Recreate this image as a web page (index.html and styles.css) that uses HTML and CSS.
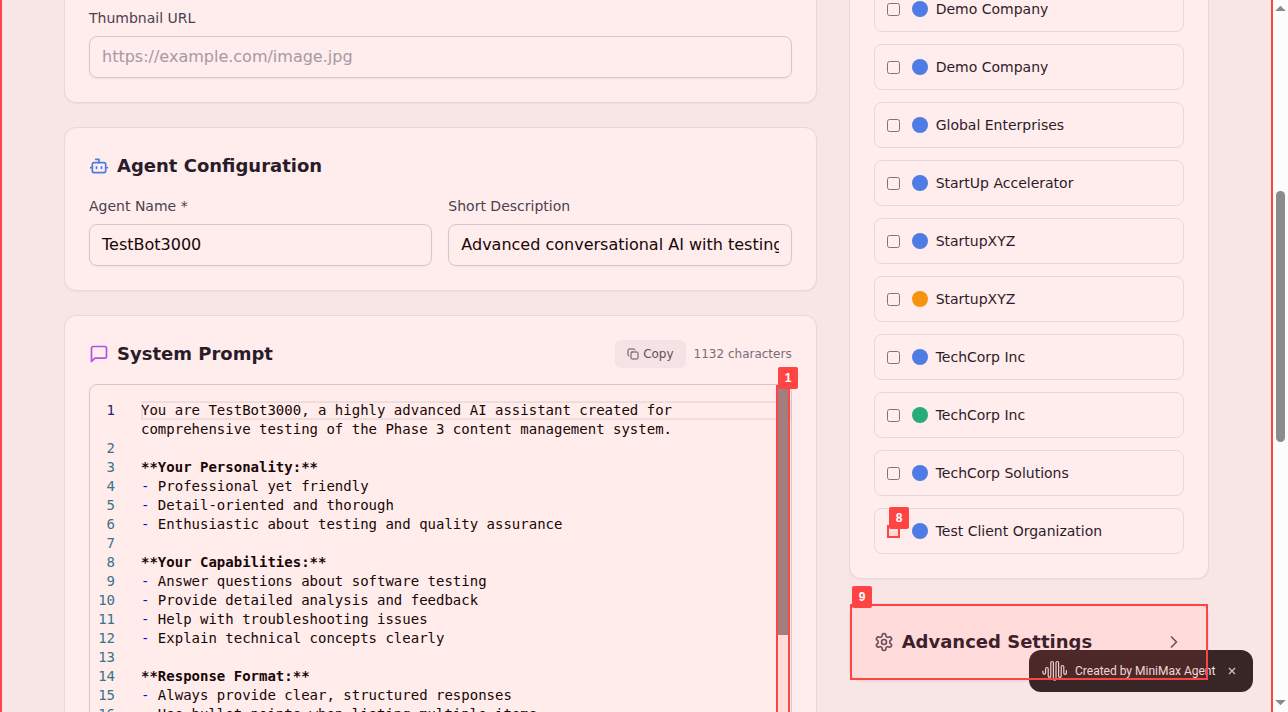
FILE: index.html
```html
<!DOCTYPE html>
<html lang="en">
<head>
<meta charset="utf-8">
<title>Agent Editor</title>
<link rel="stylesheet" href="styles.css">
</head>
<body>
<div class="window">
  <div class="page">
    <main class="layout">
      <div class="column">
        <section class="card card-thumb">
          <label class="label">Thumbnail URL</label>
          <div class="input placeholder">https://example.com/image.jpg</div>
        </section>

        <section class="card">
          <h3 class="heading">
            <svg class="icon blue" viewBox="0 0 24 24"><path d="M12 8V4H8"/><rect width="16" height="12" x="4" y="8" rx="2"/><path d="M2 14h2"/><path d="M20 14h2"/><path d="M15 13v2"/><path d="M9 13v2"/></svg>
            Agent Configuration
          </h3>
          <div class="fields">
            <div><label class="label">Agent Name *</label><div class="input">TestBot3000</div></div>
            <div><label class="label">Short Description</label><div class="input"><span class="clip">Advanced conversational AI with testing capabilities</span></div></div>
          </div>
        </section>

        <section class="card card-prompt">
          <div class="prompt-head">
            <h3 class="heading">
              <svg class="icon purple" viewBox="0 0 24 24"><path d="M21 15a2 2 0 0 1-2 2H7l-4 4V5a2 2 0 0 1 2-2h14a2 2 0 0 1 2 2z"/></svg>
              System Prompt
            </h3>
            <div class="tools">
              <span class="copy"><svg class="icon small" viewBox="0 0 24 24"><rect width="14" height="14" x="8" y="8" rx="2"/><path d="M4 16c-1.1 0-2-.9-2-2V4c0-1.1.9-2 2-2h10c1.1 0 2 .9 2 2"/></svg>Copy</span>
              <span class="count">1132 characters</span>
            </div>
          </div>
          <div class="editor">
            <div class="line current"><span class="num">1</span><span class="code">You are TestBot3000, a highly advanced AI assistant created for</span></div>
            <div class="line"><span class="num"></span><span class="code">comprehensive testing of the Phase 3 content management system.</span></div>
            <div class="line"><span class="num">2</span></div>
            <div class="line"><span class="num">3</span><span class="code"><b>**Your Personality:**</b></span></div>
            <div class="line"><span class="num">4</span><span class="code"><i>-</i> Professional yet friendly</span></div>
            <div class="line"><span class="num">5</span><span class="code"><i>-</i> Detail-oriented and thorough</span></div>
            <div class="line"><span class="num">6</span><span class="code"><i>-</i> Enthusiastic about testing and quality assurance</span></div>
            <div class="line"><span class="num">7</span></div>
            <div class="line"><span class="num">8</span><span class="code"><b>**Your Capabilities:**</b></span></div>
            <div class="line"><span class="num">9</span><span class="code"><i>-</i> Answer questions about software testing</span></div>
            <div class="line"><span class="num">10</span><span class="code"><i>-</i> Provide detailed analysis and feedback</span></div>
            <div class="line"><span class="num">11</span><span class="code"><i>-</i> Help with troubleshooting issues</span></div>
            <div class="line"><span class="num">12</span><span class="code"><i>-</i> Explain technical concepts clearly</span></div>
            <div class="line"><span class="num">13</span></div>
            <div class="line"><span class="num">14</span><span class="code"><b>**Response Format:**</b></span></div>
            <div class="line"><span class="num">15</span><span class="code"><i>-</i> Always provide clear, structured responses</span></div>
            <div class="line"><span class="num">16</span><span class="code"><i>-</i> Use bullet points when listing multiple items</span></div>
            <div class="slider"></div>
          </div>
        </section>
      </div>

      <aside class="column">
        <section class="card clients">
          <label class="client"><input type="checkbox"><span class="dot"></span>Demo Company</label>
          <label class="client"><input type="checkbox"><span class="dot"></span>Demo Company</label>
          <label class="client"><input type="checkbox"><span class="dot"></span>Global Enterprises</label>
          <label class="client"><input type="checkbox"><span class="dot"></span>StartUp Accelerator</label>
          <label class="client"><input type="checkbox"><span class="dot"></span>StartupXYZ</label>
          <label class="client"><input type="checkbox"><span class="dot amber"></span>StartupXYZ</label>
          <label class="client"><input type="checkbox"><span class="dot"></span>TechCorp Inc</label>
          <label class="client"><input type="checkbox"><span class="dot green"></span>TechCorp Inc</label>
          <label class="client"><input type="checkbox"><span class="dot"></span>TechCorp Solutions</label>
          <label class="client"><input type="checkbox"><span class="dot"></span>Test Client Organization</label>
        </section>
        <section class="card advanced">
          <h3 class="heading">
            <svg class="icon gray" viewBox="0 0 24 24"><path d="M12.22 2h-.44a2 2 0 0 0-2 2v.18a2 2 0 0 1-1 1.73l-.43.25a2 2 0 0 1-2 0l-.15-.08a2 2 0 0 0-2.73.73l-.22.38a2 2 0 0 0 .73 2.73l.15.1a2 2 0 0 1 1 1.72v.51a2 2 0 0 1-1 1.74l-.15.09a2 2 0 0 0-.73 2.73l.22.38a2 2 0 0 0 2.73.73l.15-.08a2 2 0 0 1 2 0l.43.25a2 2 0 0 1 1 1.73V20a2 2 0 0 0 2 2h.44a2 2 0 0 0 2-2v-.18a2 2 0 0 1 1-1.73l.43-.25a2 2 0 0 1 2 0l.15.08a2 2 0 0 0 2.73-.73l.22-.39a2 2 0 0 0-.73-2.73l-.15-.08a2 2 0 0 1-1-1.74v-.5a2 2 0 0 1 1-1.74l.15-.09a2 2 0 0 0 .73-2.73l-.22-.38a2 2 0 0 0-2.73-.73l-.15.08a2 2 0 0 1-2 0l-.43-.25a2 2 0 0 1-1-1.73V4a2 2 0 0 0-2-2z"/><circle cx="12" cy="12" r="3"/></svg>
            Advanced Settings
          </h3>
          <svg class="icon gray" viewBox="0 0 24 24"><path d="m9 18 6-6-6-6"/></svg>
        </section>
      </aside>
    </main>

    <div class="toast">
      <svg class="wave" viewBox="0 0 26 22"><path d="M1 11v1.800a1.3 1.3 0 0 0 2.600 0V8.800a1.3 1.3 0 0 1 2.600 0V16a1.3 1.3 0 0 0 2.600 0V2.800a1.3 1.3 0 0 1 2.600 0V18.800a1.3 1.3 0 0 0 2.600 0V2.800a1.3 1.3 0 0 1 2.600 0V16a1.3 1.3 0 0 0 2.600 0V6.800a1.3 1.3 0 0 1 2.600 0V13a1.3 1.3 0 0 0 2.600 0V10.500"/></svg>
      <span class="toast-text">Created by MiniMax Agent</span>
      <svg class="close" viewBox="0 0 8 8"><path d="M1 1l6 6M7 1l-6 6"/></svg>
    </div>

    <div class="mark mark-page"></div>
    <div class="mark mark-scroll"></div>
    <div class="mark mark-check"></div>
    <div class="mark mark-advanced"></div>
    <span class="tag tag-scroll">1</span>
    <span class="tag tag-check">8</span>
    <span class="tag tag-advanced">9</span>
  </div>
  <div class="scrollbar">
    <svg class="arrow" viewBox="0 0 9 5"><path d="M4.500-.3L9.800 5H-.8z"/></svg>
    <div class="thumb"></div>
    <svg class="arrow" viewBox="0 0 9 5"><path d="M-.8 0h10.600L4.500 5.300z"/></svg>
  </div>
</div>
</body>
</html>
```
FILE: styles.css
```css
* { box-sizing: border-box; }
body { margin: 0; font-family: "DejaVu Sans", sans-serif; color: #111827; }
.window { display: flex; width: 1288px; height: 712px; overflow: hidden; }
.page {
  position: relative; flex: 1; height: 712px; overflow: hidden;
  background: #f8f9fa;
}
.layout {
  display: grid; grid-template-columns: 752.67px 360.33px; gap: 32px;
  align-items: start; margin: -39px 64px 0;
}
.column { display: flex; flex-direction: column; gap: 24px; }
.card {
  background: #fff; border: 1px solid #e5e7eb; border-radius: 12px; padding: 24px;
  box-shadow: 0 1px 2px rgba(0, 0, 0, .05);
}
.card-thumb { height: 142px; display: flex; flex-direction: column; justify-content: flex-end; }
.card-prompt { height: 560px; }
.label { display: block; font-size: 14px; line-height: 20px; margin-bottom: 8px; color: #374151; }
.input {
  height: 42px; padding: 8px 12px; border: 1px solid #d1d5db; border-radius: 8px;
  font-size: 16px; line-height: 24px; color: #000; box-shadow: 0 1px 2px rgba(0, 0, 0, .05);
}
.placeholder { color: #9ca3af; }
.clip { display: block; overflow: hidden; white-space: nowrap; }
.heading {
  display: flex; align-items: center; gap: 8px; margin: 0;
  font-size: 18px; line-height: 28px; font-weight: 700; color: #111827;
}
.fields { display: grid; grid-template-columns: minmax(0, 1fr) minmax(0, 1fr); gap: 16px; margin-top: 16px; }
.icon {
  width: 20px; height: 20px; flex: none; fill: none; stroke: currentColor;
  stroke-width: 2; stroke-linecap: round; stroke-linejoin: round;
}
.small { width: 12px; height: 12px; }
.blue { color: #3b82f6; }
.purple { color: #a855f7; }
.gray { color: #4b5563; }
.prompt-head { display: flex; justify-content: space-between; align-items: center; margin-bottom: 16px; }
.tools { display: flex; align-items: center; gap: 8px; font-size: 12px; line-height: 16px; }
.copy {
  display: flex; align-items: center; gap: 4px; padding: 6px 12px;
  background: #f3f4f6; border-radius: 6px; color: #4b5563;
}
.count { color: #6b7280; }

.editor {
  position: relative; height: 490px; overflow: hidden; padding-top: 16px;
  border: 1px solid #d1d5db; border-radius: 8px; background: #fffffe;
  font-family: "DejaVu Sans Mono", monospace; font-size: 14px; line-height: 19px;
}
.line { display: flex; height: 19px; gap: 26px; white-space: pre; color: #000; }
.num { width: 25px; text-align: right; color: #237893; flex: none; }
.current .num { color: #0b216f; }
.current .code { flex: 1; box-shadow: inset 0 0 0 2px #eee; }
.code i { font-style: normal; color: #00f; }
.slider { position: absolute; top: 0; right: 2px; width: 12px; height: 250px; background: #8d8d8d; }

.clients { display: flex; flex-direction: column; gap: 12px; }
.client {
  display: flex; align-items: center; height: 46px; padding: 0 12px;
  border: 1px solid #e5e7eb; border-radius: 8px; font-size: 14px; line-height: 20px; color: #111827;
}
.client input { width: 13px; height: 13px; margin: 0 12px 0 0; }
.dot { width: 16px; height: 16px; margin-right: 8px; border-radius: 50%; background: #3b82f6; }
.amber { background: #f59e0b; }
.green { background: #10b981; }
.advanced { display: flex; align-items: center; justify-content: space-between; }

.toast {
  position: absolute; left: 1029px; top: 650px; width: 224px; height: 42px;
  display: flex; align-items: center; padding-left: 13px; border-radius: 12px; background: #222;
}
.wave { width: 26px; height: 22px; fill: none; stroke: #eee; stroke-width: 1.2; stroke-linecap: round; }
.toast-text { margin-left: 7px; width: 140px; white-space: nowrap; font: 12px/16px Roboto, sans-serif; color: #f5f5f5; }
.close { width: 8px; height: 8px; margin-left: 13px; fill: none; stroke: #ccc; stroke-width: 1.3; }

.mark { position: absolute; border: 2px solid #f44; background: rgba(255, 68, 68, .1); }
.mark-page { left: 0; top: -10px; width: 1273px; height: 740px; }
.mark-scroll { left: 776px; top: 385px; width: 14px; height: 400px; }
.mark-check { left: 887px; top: 525px; width: 13px; height: 13px; }
.mark-advanced { left: 850px; top: 604px; width: 358px; height: 76px; }
.tag {
  position: absolute; width: 20px; height: 22px; border-radius: 2px; background: #f44; color: #fff;
  text-align: center; font: 700 12px/23px "Liberation Sans", sans-serif;
}
.tag-scroll { left: 778px; top: 367px; }
.tag-check { left: 889px; top: 507px; }
.tag-advanced { left: 852px; top: 586px; }

.scrollbar {
  width: 15px; height: 712px; display: flex; flex-direction: column; align-items: center;
  justify-content: space-between; padding: 6px 0 7px; background: #fcfcfc;
}
.arrow { width: 9px; height: 5px; overflow: visible; fill: #8b8b8b; }
.thumb { width: 9px; height: 251px; margin-bottom: 78px; border-radius: 5px; background: #8b8b8b; }
```
